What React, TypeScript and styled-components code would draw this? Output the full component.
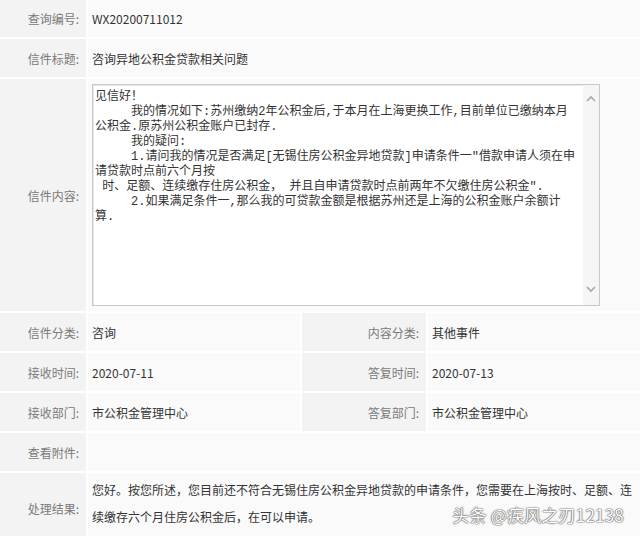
import React from 'react';
import styled, { createGlobalStyle } from 'styled-components';

const GlobalStyle = createGlobalStyle`
  body {
    margin: 0;
    background: #ffffff;
    font-family: "Noto Sans CJK SC", "Noto Sans", sans-serif;
  }
`;

const Page = styled.div`
  position: relative;
  width: 640px;
  height: 536px;
  overflow: hidden;
`;

const Table = styled.div`
  display: flex;
  flex-direction: column;
  gap: 2px;
  background: #ffffff;
`;

const Row = styled.div<{ $cols: string; $height: number }>`
  display: grid;
  grid-template-columns: ${(p) => p.$cols};
  column-gap: 2px;
  min-height: ${(p) => p.$height}px;
`;

const Label = styled.div`
  display: flex;
  align-items: center;
  justify-content: flex-end;
  padding-right: 7px;
  background: #f3f3f3;
  color: #7a7a7a;
  font-size: 12px;
  white-space: nowrap;
`;

const Value = styled.div`
  display: flex;
  align-items: center;
  padding-left: 4px;
  background: #fafafa;
  color: #333333;
  font-size: 12px;
`;

const TextValue = styled.div`
  padding: 3px 6px 0 4px;
  background: #fafafa;
  color: #333333;
  font-size: 12px;
  line-height: 27px;
`;

const ContentCell = styled.div`
  padding: 5px 0 5px 4px;
  background: #fafafa;
`;

const TextBox = styled.div`
  display: flex;
  width: 508px;
  height: 222px;
  box-sizing: border-box;
  border: 1px solid #c9c9c9;
  box-shadow: inset 1px 1px 0 #e6e6e6;
  background: #ffffff;
`;

const Letter = styled.div`
  flex: 1;
  padding: 5px 0 0 2px;
  font-family: "Liberation Mono", "Noto Sans CJK SC", monospace;
  font-size: 12px;
  line-height: 15px;
  color: #333333;
  white-space: pre;
  overflow: hidden;
`;

const ScrollTrack = styled.div`
  width: 16px;
  display: flex;
  flex-direction: column;
  justify-content: space-between;
  align-items: center;
  padding: 10px 0 12px;
  background: #f5f5f5;
`;

const Watermark = styled.div`
  position: absolute;
  right: 16px;
  bottom: 9px;
  font-size: 17px;
  color: #ffffff;
  letter-spacing: 0.2px;
  text-shadow: 0 0 1px #555, 0 0 1px #555, 0 0 2px #777;
`;

const Chevron: React.FC<{ up?: boolean }> = ({ up }) => (
  <svg width="10" height="7" viewBox="0 0 10 7">
    <path
      d={up ? 'M1 6 L5 2 L9 6' : 'M1 1 L5 5 L9 1'}
      fill="none"
      stroke="#a8a8a8"
      strokeWidth="1.6"
    />
  </svg>
);

const letter = [
  '见信好！',
  '　　　我的情况如下:苏州缴纳2年公积金后,于本月在上海更换工作,目前单位已缴纳本月',
  '公积金.原苏州公积金账户已封存.',
  '　　　我的疑问:',
  '　　　1.请问我的情况是否满足[无锡住房公积金异地贷款]申请条件一"借款申请人须在申',
  '请贷款时点前六个月按',
  ' 时、足额、连续缴存住房公积金， 并且自申请贷款时点前两年不欠缴住房公积金".',
  '　　　2.如果满足条件一,那么我的可贷款金额是根据苏州还是上海的公积金账户余额计',
  '算.',
].join('\n');

const two = '86px 1fr';
const four = '86px 212px 124px 1fr';

const App: React.FC = () => {
  return (
    <Page>
      <GlobalStyle />
      <Table>
        <Row $cols={two} $height={37}>
          <Label>查询编号:</Label>
          <Value>WX20200711012</Value>
        </Row>
        <Row $cols={two} $height={38}>
          <Label>信件标题:</Label>
          <Value>咨询异地公积金贷款相关问题</Value>
        </Row>
        <Row $cols={two} $height={232}>
          <Label>信件内容:</Label>
          <ContentCell>
            <TextBox>
              <Letter>{letter}</Letter>
              <ScrollTrack>
                <Chevron up />
                <Chevron />
              </ScrollTrack>
            </TextBox>
          </ContentCell>
        </Row>
        <Row $cols={four} $height={38}>
          <Label>信件分类:</Label>
          <Value>咨询</Value>
          <Label>内容分类:</Label>
          <Value>其他事件</Value>
        </Row>
        <Row $cols={four} $height={38}>
          <Label>接收时间:</Label>
          <Value>2020-07-11</Value>
          <Label>答复时间:</Label>
          <Value>2020-07-13</Value>
        </Row>
        <Row $cols={four} $height={38}>
          <Label>接收部门:</Label>
          <Value>市公积金管理中心</Value>
          <Label>答复部门:</Label>
          <Value>市公积金管理中心</Value>
        </Row>
        <Row $cols={two} $height={38}>
          <Label>查看附件:</Label>
          <Value />
        </Row>
        <Row $cols={two} $height={70}>
          <Label>处理结果:</Label>
          <TextValue>
            您好。按您所述，您目前还不符合无锡住房公积金异地贷款的申请条件，您需要在上海按时、足额、连续缴存六个月住房公积金后，在可以申请。
          </TextValue>
        </Row>
      </Table>
      <Watermark>头条 @疾风之刃12138</Watermark>
    </Page>
  );
};

export default App;
